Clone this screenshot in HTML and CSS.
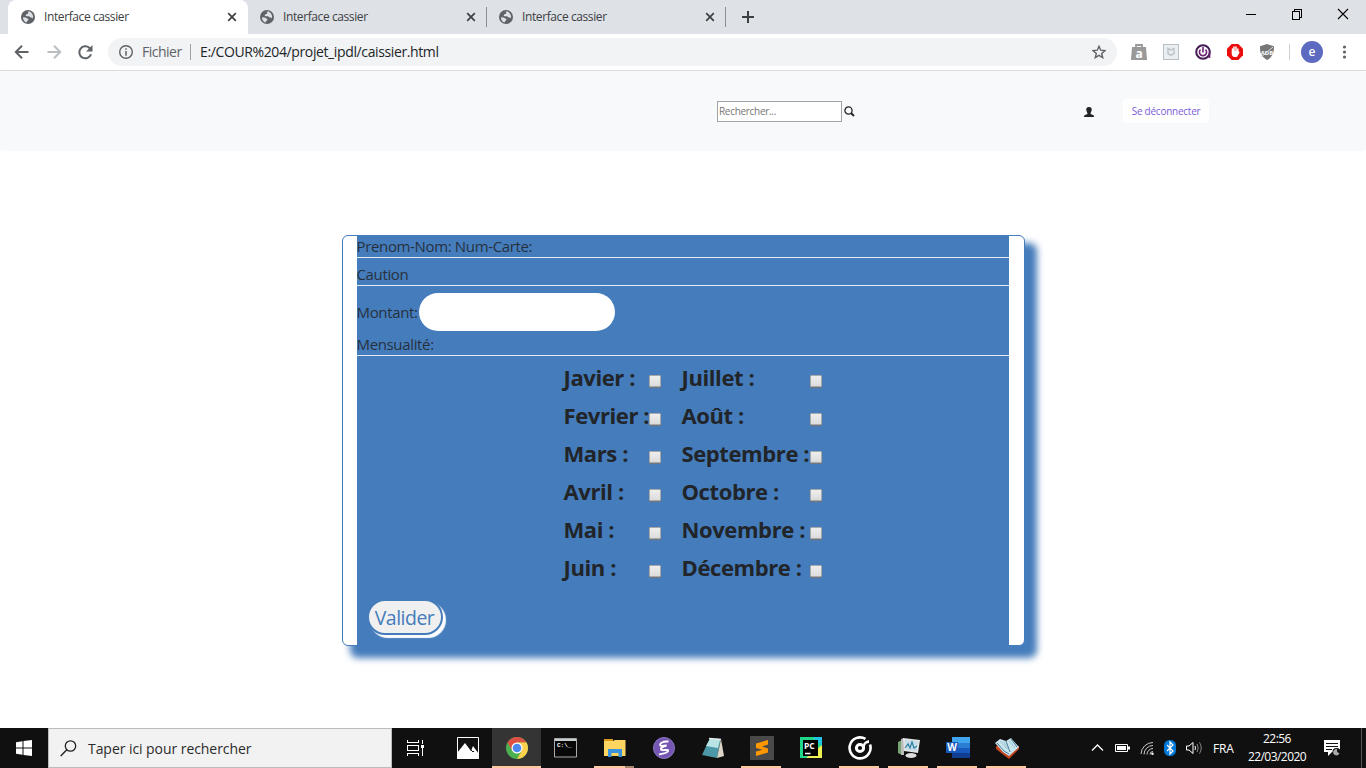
FILE: index.html
```html
<!DOCTYPE html>
<html lang="fr">
<head>
<meta charset="utf-8">
<title>Interface cassier</title>
<link rel="stylesheet" href="styles.css">
</head>
<body>
<svg class="defs" width="0" height="0">
  <symbol id="globe" viewBox="0 0 14 14"><circle cx="7" cy="7" r="7" fill="#5f6368"/><path d="M2 7.2 4.6 7.4 7.4 9 7.2 10.6 6 11 5.8 12.5C3.4 12 2 10 2 7.2ZM6.3 1.7 9 1.6 11.3 4 12.2 6.5 11.4 8.5 10.6 7.6 9 7.3 8.2 6.3H5.6L4.6 5.4 5.6 4H7L7.3 2.7Z" fill="#dee1e6"/></symbol>
  <symbol id="x" viewBox="0 0 10 10"><path d="M1.2 1.2 8.8 8.8M8.8 1.2 1.2 8.8" stroke="#3c4043" stroke-width="1.7"/></symbol>
</svg>
<header class="tabs">
  <div class="tab active"><svg class="fav"><use href="#globe"/></svg><span class="title">Interface cassier</span><svg class="close"><use href="#x"/></svg></div>
  <div class="tab second"><svg class="fav"><use href="#globe"/></svg><span class="title">Interface cassier</span><svg class="close"><use href="#x"/></svg></div>
  <div class="tab third"><svg class="fav"><use href="#globe"/></svg><span class="title">Interface cassier</span><svg class="close"><use href="#x"/></svg></div>
  <svg class="plus" viewBox="0 0 12 12"><path d="M6 0V12M0 6H12" stroke="#3c4043" stroke-width="2"/></svg>
  <svg class="win" viewBox="0 0 104 12"><g fill="none" stroke="#000" shape-rendering="crispEdges"><path d="M0 6.500H10"/><path d="M46.500 3.500H53.500V11.500H46.500ZM48.500 3.500V1.500H55.500V9.500H53.500"/></g><path d="M92 1 102 11M102 1 92 11" stroke="#000" stroke-width="1.100"/></svg>
</header>
<div class="toolbar">
  <svg class="nav" viewBox="0 0 80 16"><path d="M14.500 8H2M8 1.800 1.800 8 8 14.200" fill="none" stroke="#5f6368" stroke-width="2"/><path d="M33.500 8H46M40 1.800 46.200 8 40 14.200" fill="none" stroke="#bcbfc2" stroke-width="2"/><path d="M77 10.200A6 6 0 1 1 75.500 4L77 5.500" fill="none" stroke="#5f6368" stroke-width="2"/><path d="M78.500 1V7.500H72Z" fill="#5f6368"/></svg>
  <div class="address">
    <svg class="info" viewBox="0 0 14 14"><circle cx="7" cy="7" r="6.300" fill="none" stroke="#5f6368" stroke-width="1.400"/><path d="M7 3.200V4.800M7 6V10.800" stroke="#5f6368" stroke-width="1.500"/></svg>
    <span class="scheme">Fichier</span><i class="bar"></i><span class="url">E:/COUR%204/projet_ipdl/caissier.html</span>
    <svg class="star" viewBox="0 0 14 14"><path d="M7 1.300 8.700 5.200 13 5.600 9.700 8.400 10.700 12.600 7 10.300 3.300 12.600 4.300 8.400 1 5.600 5.300 5.200Z" fill="none" stroke="#5f6368" stroke-width="1.400"/></svg>
  </div>
  <svg class="ext" viewBox="0 0 220 26">
    <path d="M1 8H15L16 21H0Z" fill="#999"/><path d="M5 9V6H11V9" fill="none" stroke="#999" stroke-width="1.800"/><text x="8" y="18.500" text-anchor="middle" class="ea">a</text>
    <rect x="32.500" y="5.500" width="15" height="15" fill="#eceff1" stroke="#b7c0c6"/><path d="M37 9.500 40 11 43 9.500V14.500L40 16.300 37 14.500Z" fill="none" stroke="#bdc5ca" stroke-width="1.500"/>
    <circle cx="72" cy="13" r="6.800" fill="none" stroke="#431b54" stroke-width="2"/><path d="M69.500 10.500A3.600 3.600 0 1 0 74.500 10.500M72 8V13.500M78.500 13V19" fill="none" stroke="#6c2171" stroke-width="1.600"/>
    <path d="M100.700 5H107.300L112 9.700V16.300L107.300 21H100.700L96 16.300V9.700Z" fill="#ec0d0d"/><path d="M101.500 14V10M103 13V8M105 13V8M106.800 14V10" stroke="#fff" stroke-width="1.500" stroke-linecap="round"/><path d="M100.800 12H107.600L108.600 13.500 106 18H102.500L100.800 16Z" fill="#fff"/>
    <path d="M136 5 143 7.300C143.200 14 141.500 18 136 21 130.500 18 128.800 14 129 7.300Z" fill="#777"/><text x="136" y="15.500" text-anchor="middle" class="adb">ADB</text><path d="M130 18 142 8" stroke="#ddd"/>
    <path d="M158.500 5V21" stroke="#cdd0d3"/><circle cx="181" cy="13" r="11" fill="#5c6bc0"/><text x="181" y="17" text-anchor="middle" class="ee">e</text>
    <g fill="#5f6368"><circle cx="213.500" cy="8" r="1.600"/><circle cx="213.500" cy="13" r="1.600"/><circle cx="213.500" cy="18" r="1.600"/></g>
  </svg>
</div>
<nav class="navbar">
  <input class="search" type="text" placeholder="Rechercher...">
  <svg class="mag" viewBox="0 0 11 11"><circle cx="4.500" cy="4.500" r="3.600" fill="none" stroke="#212529" stroke-width="1.300"/><path d="M7 7 10 10" stroke="#212529" stroke-width="1.900"/></svg>
  <svg class="user" viewBox="0 0 10 10"><path d="M5 0C7.300 0 8 1.500 7.700 3 7.500 4.500 6.800 5.200 6.600 6.100V7L9.500 8.200Q10 8.600 10 10H0Q0 8.600 .5 8.200L3.400 7V6.100C3.200 5.200 2.500 4.500 2.300 3 2 1.500 2.700 0 5 0Z" fill="#212529"/></svg>
  <button class="logout">Se déconnecter</button>
</nav>
<main class="page">
  <section class="card">
    <form class="form">
      <div class="row first"><span>Prenom-Nom: Num-Carte:</span></div>
      <div class="row"><span>Caution</span></div>
      <div class="amount"><label for="m">Montant:</label><input id="m" class="pill" type="text"></div>
      <div class="row month"><span>Mensualité:</span></div>
      <div class="months">
        <b>Javier :</b><i class="cb"></i><b>Juillet :</b><i class="cb"></i>
        <b>Fevrier :</b><i class="cb"></i><b>Août :</b><i class="cb"></i>
        <b>Mars :</b><i class="cb"></i><b>Septembre :</b><i class="cb"></i>
        <b>Avril :</b><i class="cb"></i><b>Octobre :</b><i class="cb"></i>
        <b>Mai :</b><i class="cb"></i><b>Novembre :</b><i class="cb"></i>
        <b>Juin :</b><i class="cb"></i><b>Décembre :</b><i class="cb"></i>
      </div>
      <button class="submit" type="button">Valider</button>
    </form>
  </section>
</main>
<footer class="taskbar">
  <div class="start"><svg width="16" height="16" viewBox="0 0 16 16"><path d="M0 2.200 6.500 1.200V7.500H0ZM7.500 1 16 0V7.500H7.500ZM0 8.500H6.500V14.800L0 13.800ZM7.500 8.500H16V16L7.500 15Z" fill="#fff"/></svg></div>
  <div class="find"><svg width="17" height="17" viewBox="0 0 17 17"><circle cx="10.500" cy="6" r="5.200" fill="none" stroke="#222" stroke-width="1.300"/><path d="M6.800 9.800.7 16" stroke="#222" stroke-width="1.400"/></svg><span>Taper ici pour rechercher</span></div>
  <div class="apps">
    <div class="app view"><svg viewBox="0 0 24 24"><g fill="none" stroke="#fff" shape-rendering="crispEdges"><path d="M3.500 4V6.500H14.500V4M3.500 20V17.500H14.500V20M3.500 9.500H14.500V14.500H3.500ZM18.500 4V8M18.500 12V20"/></g><path d="M17 9H20V12H17Z" fill="#fff"/></svg></div>
    <div class="app"><svg viewBox="0 0 24 24"><path d="M1.500 1.500H22.500V22.500H1.500Z" fill="#111" stroke="#fff"/><path d="M1 17 9 7 15 15 17 10 23 18V23H1Z" fill="#fff"/><path d="M14 13 17 16 18 15" stroke="#111" fill="none"/></svg></div>
    <div class="app cur"><svg viewBox="0 0 24 24"><circle cx="12" cy="12" r="11" fill="#4caf50"/><path d="M12 12 2.500 6.500A11 11 0 0 1 21.500 6.500H12Z" fill="#dc5144"/><path d="M12 6.500H21.500A11 11 0 0 1 12 23L16.800 14.800Z" fill="#ffd04b"/><path d="M2.500 6.500 7.200 14.700 12 12V6.500Z" fill="#dc5144"/><circle cx="12" cy="12" r="5.500" fill="#fff"/><circle cx="12" cy="12" r="4.300" fill="#4a88ed"/></svg></div>
    <div class="app"><svg viewBox="0 0 24 24"><path d="M.5 2.500H22.500V21H.5Z" fill="#080808" stroke="#aaa"/><path d="M1 3H22V5H1Z" fill="#c8cdd0"/><text x="3" y="11" class="cmd">C:\_</text></svg></div>
    <div class="app on folder"><svg viewBox="0 0 24 24"><path d="M1 3H10V6H1Z" fill="#d89a17"/><path d="M1 5H10L12 4H22.500V20H1Z" fill="#ffd561"/><path d="M5 13H19V21H15.500V17H8.500V21H5Z" fill="#3a93dc"/></svg></div>
    <div class="app"><svg viewBox="0 0 24 24"><circle cx="12" cy="12" r="10.500" fill="#7557b3" stroke="#8d79c5"/><path d="M16.500 5.500C10 5 7 8 8.500 9.500 9.500 10.500 12 9.500 14.500 9.500 8 11.500 8 13.500 10 14 12 14.500 17 13 16 15 15 17.500 9 18 7 18.500" fill="none" stroke="#fff" stroke-width="1.900"/></svg></div>
    <div class="app"><svg viewBox="0 0 24 24"><path d="M9 2 20 3 16 22 1 19Z" fill="#4d98a8"/><path d="M9 3 19 4 17 12 5 10Z" fill="#b9e3e5"/><path d="M20 3 23 20 16 22Z" fill="#ddd5c7"/><path d="M8 2.500 20 3.500" stroke="#eee" stroke-width="1.500"/></svg></div>
    <div class="app on"><svg viewBox="0 0 24 24"><rect width="24" height="24" rx="1" fill="#494949"/><path d="M18 4V8.500L12 10.500 18 12.500V16.500L6 20V15.500L12.500 13.800 6 12V7.500Z" fill="#ff9800"/></svg></div>
    <div class="app"><svg viewBox="0 0 24 24"><path d="M1 1H23V22H1Z" fill="#21d789"/><path d="M14 1H23V10Z" fill="#20c4e8"/><path d="M23 9V22H7Z" fill="#eff052"/><path d="M4 4H19V20H4Z" fill="#000"/><text x="5" y="13" class="pc">PC</text><path d="M6 17.500H11.500" stroke="#fff" stroke-width="1.500"/></svg></div>
    <div class="app on"><svg viewBox="0 0 24 24"><path d="M17.500 2.900A10.500 10.500 0 1 0 22 8.500" fill="none" stroke="#fff" stroke-width="2.600"/><circle cx="12" cy="12" r="3.600" fill="none" stroke="#fff" stroke-width="3"/><path d="M15 12V8.500Q16 5 21 4V7Q17.500 7 17 10V12Z" fill="#fff"/></svg></div>
    <div class="app on"><svg viewBox="0 0 24 24"><path d="M1 6 5 4V19L1 17Z" fill="#77a473"/><path d="M4 3 7 2V19H4Z" fill="#bbb"/><path d="M6 2 23 4 21 17 7 15Z" fill="#e1e5e6"/><path d="M8 4 21 5.500 19.500 15 9 13.500Z" fill="#c5dbe7"/><path d="M8 12 11 8 13 12 15 6 17 12 20 10" fill="none" stroke="#2f80a6" stroke-width="1.200"/><ellipse cx="14" cy="19.500" rx="5.500" ry="2.500" fill="#dedede"/></svg></div>
    <div class="app on"><svg viewBox="0 0 24 24"><path d="M6 1H24V7H6Z" fill="#41a5ee"/><path d="M6 7H24V12H6Z" fill="#2b7cd3"/><path d="M6 12H24V17H6Z" fill="#185abd"/><path d="M6 17H24V22H6Z" fill="#103f91"/><path d="M0 6H12V17H0Z" fill="#185abd"/><text x="6" y="15" text-anchor="middle" class="word">W</text></svg></div>
    <div class="app on"><svg viewBox="0 0 24 24"><path d="M1 13 14 23 24 13V10L1 10Z" fill="#c64420"/><path d="M0 7 5 3 11 5 16 2 24 11 14 20 8 16Z" fill="#c9e6ee"/><path d="M2 7 9 15 14 18M11 5 15 16M16 3 22 11" fill="none" stroke="#477b94"/><path d="M5 5 12 13M8 5 14 14M14 5 20 12" fill="none" stroke="#8fb6c6" stroke-width=".8"/></svg></div>
  </div>
  <div class="tray">
    <svg width="120" height="24" viewBox="0 0 120 24"><path d="M1 14.500 6.500 9 12 14.500" fill="none" stroke="#fff" stroke-width="1.300"/><path d="M24.500 8.500H36.500V15.500H24.500Z" fill="#111" stroke="#fff"/><path d="M26 10H35V14H26ZM37 10.500H39V13.500H37Z" fill="#fff"/><g fill="none" stroke="#ccc"><path d="M50 18A12 12 0 0 1 62 6.500M53 18.500A9 9 0 0 1 62 9.500M56 18.500A6 6 0 0 1 62 12.500M59 18.500A3 3 0 0 1 62 15.500"/></g><circle cx="61.500" cy="17.800" r="1.200" fill="#fff"/><rect x="73" y="4" width="12" height="16" rx="5.500" fill="#0078d7"/><path d="M76 9 82 15 79 18V6L82 9 76 15" fill="none" stroke="#fff" stroke-width="1.200"/><path d="M95.500 10H98L102 6.500V17.500L98 14H95.500Z" fill="none" stroke="#fff"/><path d="M104 10Q105 12 104 14" stroke="#fff" fill="none"/><path d="M106 8Q108.500 12 106 16M108.500 6.500Q112 12 108.500 17.500" stroke="#888" fill="none"/></svg>
    <span class="lang">FRA</span>
    <div class="clock"><span>22:56</span><span class="date">22/03/2020</span></div>
    <svg class="note" width="17" height="17" viewBox="0 0 17 17"><path d="M0 0H16V12H8L4 16V12H0Z" fill="#fff"/><path d="M2 3.500H14M2 6.500H14M2 9.500H8" stroke="#111"/><circle cx="12.500" cy="12" r="4" fill="#111"/><path d="M13 9A3.200 3.200 0 1 0 15.500 13Q12.500 13 13 9Z" fill="#aaa"/></svg>
    <i class="peek"></i>
  </div>
</footer>
</body>
</html>
```
FILE: styles.css
```css
*{box-sizing:border-box}
body{margin:0;width:1366px;height:768px;overflow:hidden;background:#fff;color:#212529;font-family:"Open Sans","Noto Sans",sans-serif;display:flex;flex-direction:column}
svg{display:block;flex:none}
span,label,b,button{white-space:nowrap}
.defs{position:absolute}
.tabs{height:34px;flex:none;background:#dee1e6;display:flex;align-items:center;padding-left:8px}
.tab{height:34px;display:flex;align-items:center;padding:0 11px 0 13px;width:239px;color:#3c4043}
.tab.active{width:240px;background:#fff;border-radius:8px 8px 0 0}
.tab.second{padding-left:12px}
.fav{width:14px;height:14px}
.title{font-size:12px;letter-spacing:-.4px;margin-left:9px;margin-top:-1px;flex:1}
.close{width:10px;height:10px}
.tab.second,.tab.third{background:linear-gradient(#8b8e93,#8b8e93) right center/1px 20px no-repeat}
.tab.third{padding-left:12px}
.plus{width:12px;height:12px;margin-left:16px}
.win{width:104px;height:12px;margin-left:auto;margin-right:16px;margin-bottom:6px}
.toolbar{height:37px;flex:none;border-bottom:1px solid #dadce0;display:flex;align-items:center;padding-left:14px}
.nav{width:80px;height:16px}
.address{margin-left:14px;width:1009px;height:28px;border-radius:14px;background:#f1f3f4;display:flex;align-items:center;padding:0 11px;font-size:14px}
.info{width:14px;height:14px}
.scheme{margin-left:9px;margin-top:-1px;color:#5f6368;width:41px;letter-spacing:-.5px}
.bar{width:1px;height:16px;background:#9aa0a6;margin:0 9px 0 7px}
.url{letter-spacing:-.38px;margin-top:-1px;flex:1}
.star{width:14px;height:14px}
.ext{width:220px;height:26px;margin-left:14px}
.ea{font:bold 12px "Open Sans";fill:#fff}
.adb{font:bold 6px "Open Sans";fill:#fff}
.ee{font:600 12px "Open Sans";fill:#fff}
.navbar{height:80px;flex:none;background:#f8f9fa;border-radius:4px;display:flex;align-items:center;padding:0 157px 0 717px}
.search{width:125px;height:21px;border:1px solid #a3a3a3;background:#fff;padding:0 1px;font:10px "Open Sans",sans-serif;letter-spacing:-.3px;outline:0}
.search::placeholder{color:#757575;opacity:1}
.mag{width:11px;height:11px;margin-left:2px}
.user{width:10px;height:10px;margin-left:229px;margin-top:2px}
.logout{width:86px;height:24px;margin-left:auto;border:0;border-radius:3px;background:#fff;color:#7b5cd8;font:10px "Open Sans",sans-serif;padding:0;letter-spacing:-.25px}
.page{flex:1;display:flex;justify-content:center;align-items:flex-start;padding-top:84px}
.card{width:683px;height:411px;border:1px solid #457cbb;border-radius:6px;padding:0 15px 0 14px;background:#fff;box-shadow:10px 10px 7px 2px #457cbb}
.form{height:409px;background:#457cbb;font-size:15px;line-height:22px;letter-spacing:-.35px}
.row span,.amount label{color:rgba(33,37,41,.88)}
.row{height:28px;padding-top:6px;line-height:21px;border-bottom:1px solid #e4edf6}
.row.first{height:22px;padding-top:0}
.amount{display:flex;height:52px;padding-top:7px}
.amount label{width:62px;line-height:39px}
.pill{width:196px;height:38px;border:0;border-radius:20px;background:#fff;padding:0 12px}
.row.month{height:18px;padding:0;line-height:12px}
.months{display:grid;grid-template-columns:85px 33px 128px 20px;grid-auto-rows:38px;padding:4px 0 0 207px;line-height:34px;font-size:22px}
.months b{letter-spacing:-.4px}
.cb{width:12px;height:12px;margin-top:15px;border:1px solid #a9a9a9;border-radius:1px;background:linear-gradient(#eee,#dcdcdc);box-shadow:0 1px 1px #777}
.submit{display:block;width:76px;height:36px;margin:11px 0 0 10px;border:2px solid #457cbb;border-radius:18px;background:#f0f0f0;color:#457cbb;box-shadow:3px 3px 1px #fff;font:19.5px/28px "Open Sans",sans-serif;padding:2px 0 0;letter-spacing:-.5px}
.taskbar{height:40px;flex:none;background:#101010;color:#fff;display:flex}
.start{width:48px;display:flex;align-items:center;justify-content:center}
.find{width:344px;background:#f2f2f2;border:1px solid #bbb;display:flex;align-items:center;padding-left:11px;color:#2b2b2b;font-size:14px;letter-spacing:-.06px}
.find span{margin-left:11px}
.apps{display:flex}
.app{width:49px;height:40px;display:flex;align-items:center;justify-content:center}
.app.view{width:51px;padding-right:3px}
.app svg{width:24px;height:24px}
.cur{background:#343434 linear-gradient(#ffc9a0,#ffc9a0) 0 100%/100% 2px no-repeat}
.on{background:linear-gradient(#ffc9a0,#ffc9a0) 4px 100%/40px 2px no-repeat}
.on.folder{background-image:linear-gradient(90deg,#ffc9a0 31px,#a5856c 31px)}
.cmd{font:bold 6px "Liberation Mono";fill:#fff}
.pc{font:bold 8.5px "Open Sans";fill:#fff}
.word{font:bold 10px "Open Sans";fill:#fff}
.tray{margin-left:auto;display:flex;align-items:center;font-size:12px}
.lang{margin-left:2px;width:22px;letter-spacing:-.2px}
.clock{width:64px;margin-left:10px;display:flex;flex-direction:column;align-items:center;line-height:18px;letter-spacing:-.55px}
.note{margin-left:15px}
.peek{width:1px;height:40px;background:#555;margin-left:20px;margin-right:4px}
```
